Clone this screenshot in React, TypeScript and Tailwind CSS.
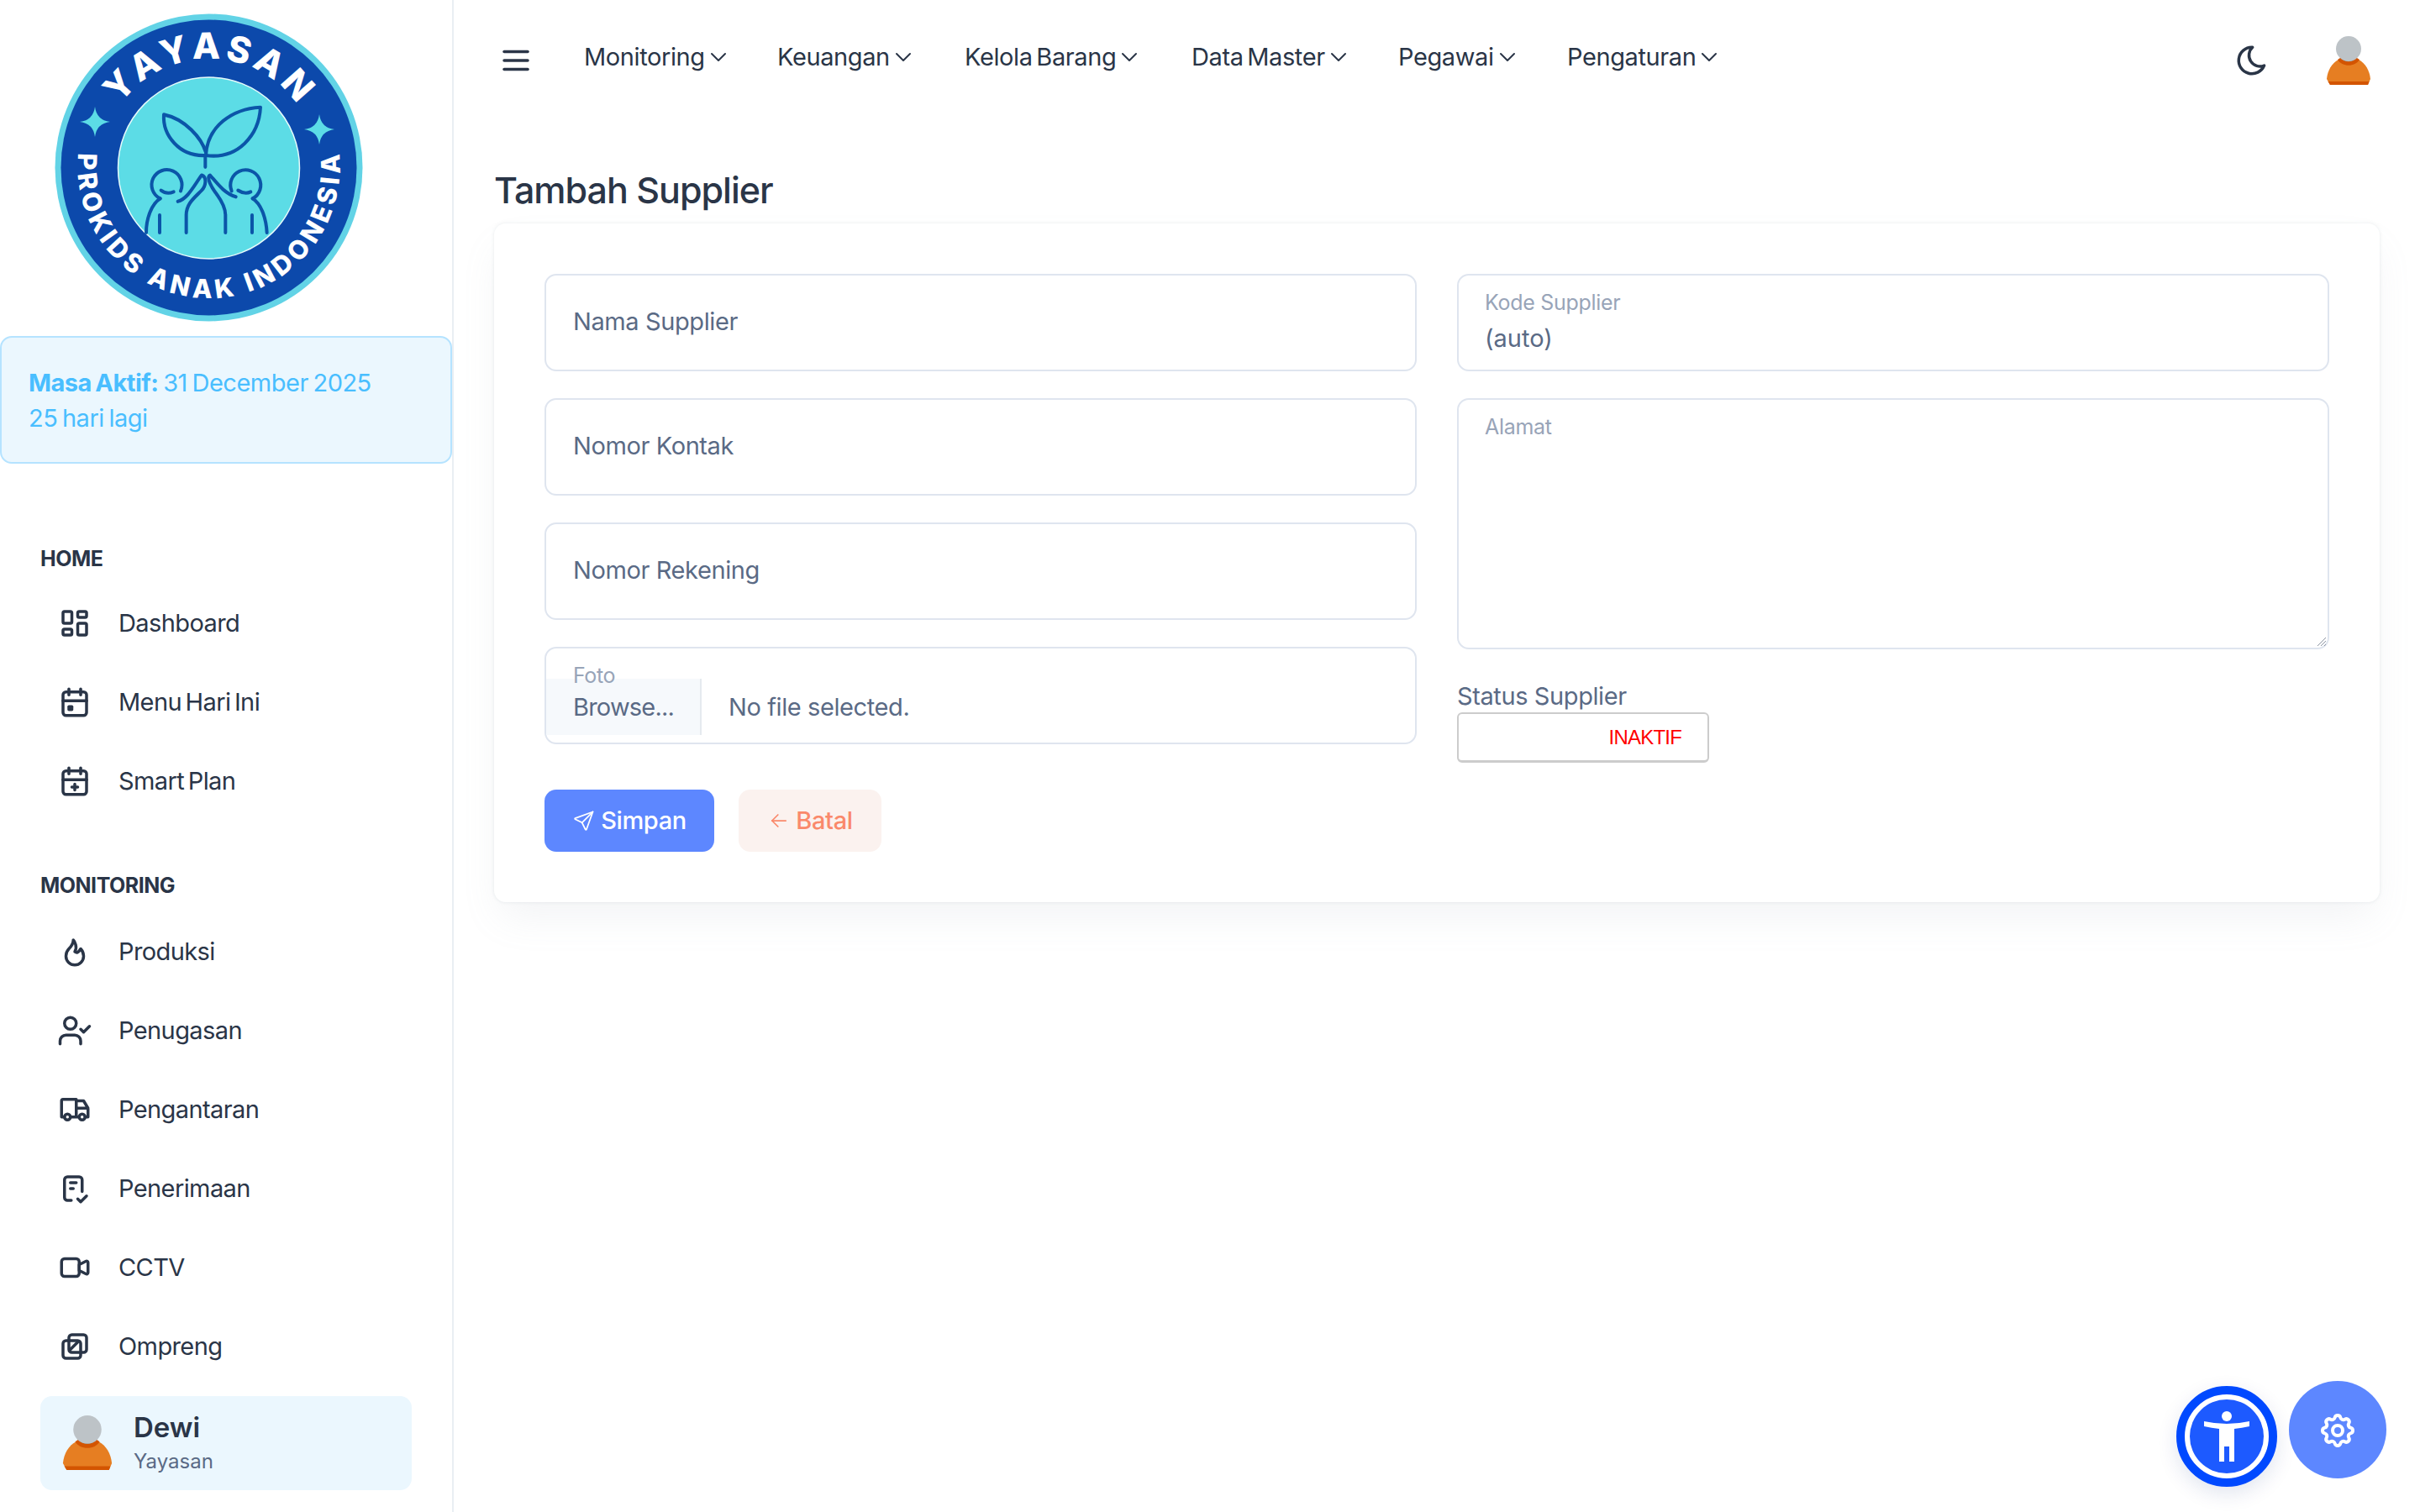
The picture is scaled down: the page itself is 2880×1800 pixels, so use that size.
import React from "react";

const ic: Record<string, string[]> = {
  dashboard: ["M5 4h4a1 1 0 0 1 1 1v6a1 1 0 0 1 -1 1h-4a1 1 0 0 1 -1 -1v-6a1 1 0 0 1 1 -1", "M5 16h4a1 1 0 0 1 1 1v2a1 1 0 0 1 -1 1h-4a1 1 0 0 1 -1 -1v-2a1 1 0 0 1 1 -1", "M15 12h4a1 1 0 0 1 1 1v6a1 1 0 0 1 -1 1h-4a1 1 0 0 1 -1 -1v-6a1 1 0 0 1 1 -1", "M15 4h4a1 1 0 0 1 1 1v2a1 1 0 0 1 -1 1h-4a1 1 0 0 1 -1 -1v-2a1 1 0 0 1 1 -1"],
  calEvent: ["M4 5m0 2a2 2 0 0 1 2 -2h12a2 2 0 0 1 2 2v12a2 2 0 0 1 -2 2h-12a2 2 0 0 1 -2 -2z", "M16 3v4", "M8 3v4", "M4 11h16", "M8 15h2v2h-2z"],
  calPlus: ["M4 5m0 2a2 2 0 0 1 2 -2h12a2 2 0 0 1 2 2v12a2 2 0 0 1 -2 2h-12a2 2 0 0 1 -2 -2z", "M16 3v4", "M8 3v4", "M4 11h16", "M10 16h4", "M12 14v4"],
  flame: ["M12 12c2 -2.96 0 -7 -1 -8c0 3.038 -1.773 4.741 -3 6c-1.226 1.26 -2 3.24 -2 5a6 6 0 1 0 12 0c0 -1.532 -1.056 -3.94 -2 -5c-1.786 3 -2.791 3 -4 2z"],
  userCheck: ["M5 7a4 4 0 1 0 8 0a4 4 0 0 0 -8 0", "M2 21v-2a4 4 0 0 1 4 -4h6a4 4 0 0 1 4 4v2", "M16 11l2 2l4 -4"],
  truck: ["M7 17m-2 0a2 2 0 1 0 4 0a2 2 0 1 0 -4 0", "M17 17m-2 0a2 2 0 1 0 4 0a2 2 0 1 0 -4 0", "M5 17h-2v-11a1 1 0 0 1 1 -1h9v12m-4 0h6m4 0h2v-6h-8m0 -5h5l3 5"],
  checklist: ["M9.615 20h-2.615a2 2 0 0 1 -2 -2v-12a2 2 0 0 1 2 -2h8a2 2 0 0 1 2 2v8", "M14 19l2 2l4 -4", "M9 8h4", "M9 12h2"],
  video: ["M15 10l4.553 -2.276a1 1 0 0 1 1.447 .894v6.764a1 1 0 0 1 -1.447 .894l-4.553 -2.276v-4z", "M3 6m0 2a2 2 0 0 1 2 -2h8a2 2 0 0 1 2 2v8a2 2 0 0 1 -2 2h-8a2 2 0 0 1 -2 -2z"],
  layers: ["M8 4m0 2a2 2 0 0 1 2 -2h8a2 2 0 0 1 2 2v8a2 2 0 0 1 -2 2h-8a2 2 0 0 1 -2 -2z", "M4 8m0 2a2 2 0 0 1 2 -2h8a2 2 0 0 1 2 2v8a2 2 0 0 1 -2 2h-8a2 2 0 0 1 -2 -2z", "M9 14l5 -5"],
  menu: ["M4 6h16", "M4 12h16", "M4 18h16"],
  chevron: ["M6 9l6 6l6 -6"],
  moon: ["M12 3c.132 0 .263 0 .393 0a7.5 7.5 0 0 0 7.92 12.446a9 9 0 1 1 -8.313 -12.454z"],
  send: ["M10 14l11 -11", "M21 3l-6.5 18a.55 .55 0 0 1 -1 0l-3.5 -7l-7 -3.5a.55 .55 0 0 1 0 -1l18 -6.5"],
  arrow: ["M5 12h14", "M5 12l6 6", "M5 12l6 -6"],
  settings: ["M10.325 4.317c.426 -1.756 2.924 -1.756 3.35 0a1.724 1.724 0 0 0 2.573 1.066c1.543 -.94 3.31 .826 2.37 2.37a1.724 1.724 0 0 0 1.065 2.572c1.756 .426 1.756 2.924 0 3.35a1.724 1.724 0 0 0 -1.066 2.573c.94 1.543 -.826 3.31 -2.37 2.37a1.724 1.724 0 0 0 -2.572 1.065c-.426 1.756 -2.924 1.756 -3.35 0a1.724 1.724 0 0 0 -2.573 -1.066c-1.543 .94 -3.31 -.826 -2.37 -2.37a1.724 1.724 0 0 0 -1.065 -2.572c-1.756 -.426 -1.756 -2.924 0 -3.35a1.724 1.724 0 0 0 1.066 -2.573c-.94 -1.543 .826 -3.31 2.37 -2.37c1 .608 2.296 .07 2.572 -1.065z", "M9 12a3 3 0 1 0 6 0a3 3 0 0 0 -6 0"],
};

function Icon({ name, className, sw = 2 }: { name: string; className?: string; sw?: number }) {
  return (
    <svg viewBox="0 0 24 24" fill="none" stroke="currentColor" strokeWidth={sw} strokeLinecap="round" strokeLinejoin="round" className={className}>
      {ic[name].map((d) => (
        <path key={d} d={d} />
      ))}
    </svg>
  );
}

function Avatar({ className }: { className?: string }) {
  return (
    <svg viewBox="0 0 52 59" className={className}>
      <path d="M0 51c1-10 6-19 14-23h24c8 4 13 13 14 23l-3 7H4z" fill="#e67e22" />
      <path d="M1.500 54h49l-1.500 4H4z" fill="#d35400" />
      <path d="M13 28c5 9 21 9 26 0l-3-2H16z" fill="#d35400" />
      <path d="M16 25c4 7 16 7 20 0v-3H16z" fill="#95a5a6" />
      <circle cx="26" cy="15" r="15" fill="#bdc3c7" />
    </svg>
  );
}

function Logo() {
  const teal = "#5cdce6";
  const line = "#0b55a8";
  return (
    <svg viewBox="0 0 367 367" className="w-[367px] h-[367px] ml-[65px] mt-4 shrink-0 [font-family:Inter,sans-serif]">
      <defs>
        <path id="topArc" d="M183.500 312A129 129 0 1 1 183.500 54A129 129 0 1 1 183.500 312" />
        <path id="bottomArc" d="M183.500 27A156 156 0 1 0 183.500 339A156 156 0 1 0 183.500 27" />
      </defs>
      <circle cx="183.500" cy="183.500" r="183" fill="#62d3e6" />
      <circle cx="183.500" cy="183.500" r="176" fill="#0c49ab" />
      <circle cx="183.500" cy="184" r="108" fill={teal} stroke="#e6fafa" strokeWidth="1.500" />
      <text fill="#fff" fontSize="43" fontWeight="800" letterSpacing="5.500" textAnchor="middle">
        <textPath href="#topArc" startOffset="50.300%">YAYASAN</textPath>
      </text>
      <text fill="#fff" fontSize="31" fontWeight="800" letterSpacing="4.800" textAnchor="middle">
        <textPath href="#bottomArc" startOffset="50.200%">PROKIDS ANAK INDONESIA</textPath>
      </text>
      <path d="M48 111Q50 127 66 129Q50 131 48 147Q46 131 30 129Q46 127 48 111Z" fill={teal} />
      <path d="M315 120Q317 136 333 138Q317 140 315 156Q313 140 297 138Q313 136 315 120Z" fill={teal} />
      <g transform="translate(-15 -18.400) scale(0.3333 0.347)" fill="none" stroke={line} strokeWidth="12" strokeLinecap="round" strokeLinejoin="round">
        <path d="M585 540C590 440 680 380 780 375C775 470 700 555 585 540" />
        <path d="M585 530C570 480 510 415 435 400C430 470 490 545 585 540" />
        <path d="M583 540V580" />
        <path d="M422 688A54 52 0 1 1 495 662" />
        <path d="M425 660Q445 675 470 665" />
        <path d="M372 805C372 750 395 705 422 688" />
        <path d="M485 698C520 690 545 640 570 608C590 615 585 645 570 660C545 685 515 705 515 745V805" />
        <path d="M420 745V805" />
        <path d="M752 688A54 52 0 1 0 677 662" />
        <path d="M700 660Q725 675 745 665" />
        <path d="M803 805C800 750 780 705 752 688" />
        <path d="M692 682C650 670 625 635 600 608C585 615 605 650 625 675C640 695 655 720 655 745V805" />
        <path d="M750 745V805" />
      </g>
    </svg>
  );
}

const home = [
  { label: "Dashboard", icon: "dashboard" },
  { label: "Menu Hari Ini", icon: "calEvent" },
  { label: "Smart Plan", icon: "calPlus" },
];
const monitoring = [
  { label: "Produksi", icon: "flame" },
  { label: "Penugasan", icon: "userCheck" },
  { label: "Pengantaran", icon: "truck" },
  { label: "Penerimaan", icon: "checklist" },
  { label: "CCTV", icon: "video" },
  { label: "Ompreng", icon: "layers" },
];
const topNav = [
  { label: "Monitoring", w: "w-[230px]" },
  { label: "Keuangan", w: "w-[223px]" },
  { label: "Kelola Barang", w: "w-[270px]" },
  { label: "Data Master", w: "w-[246px]" },
  { label: "Pegawai", w: "w-[201px]" },
  { label: "Pengaturan", w: "w-[184px]" },
];

function SideItem({ label, icon }: { label: string; icon: string }) {
  return (
    <a className="flex items-center h-[94px] pl-[68px] gap-[31px] text-[#2a3547] text-[29px] tracking-[-0.6px] [word-spacing:-3px]">
      <Icon name={icon} className="w-[42px] h-[42px] shrink-0" />
      {label}
    </a>
  );
}

function Field({ label }: { label: string }) {
  return (
    <div className="h-[116px] border-2 border-[#dfe5ef] rounded-[14px] flex items-center pl-[32px] pb-[3px] text-[29px] tracking-[-0.4px] text-[#5a6a85]">
      {label}
    </div>
  );
}

export default function App() {
  return (
    <div className="flex w-full h-[1800px] overflow-hidden bg-white [font-family:Inter,sans-serif]">
      {/* Sidebar */}
      <aside className="w-[540px] shrink-0 border-r-2 border-[#e9eef3] flex flex-col">
        <Logo />
        <div className="mt-[17px] h-[152px] border-2 border-[#b5e3ff] bg-[#ebf7fe] rounded-[14px] pl-[32px] pt-[2px] flex flex-col justify-center text-[29px] leading-[42px] tracking-[-0.5px] [word-spacing:-2px] text-[#49beff]">
          <p>
            <span className="font-bold">Masa Aktif:</span> 31 December 2025
          </p>
          <p>25 hari lagi</p>
        </div>

        <h5 className="mt-[93px] mb-[10px] pl-12 h-10 leading-10 text-[25px] font-bold tracking-[-0.5px] text-[#2a3547]">HOME</h5>
        {home.map((i) => (
          <SideItem key={i.label} {...i} />
        ))}

        <h5 className="mt-[57px] mb-3 pl-12 h-10 leading-10 text-[25px] font-bold tracking-[-0.5px] text-[#2a3547]">MONITORING</h5>
        {monitoring.map((i) => (
          <SideItem key={i.label} {...i} />
        ))}

        <div className="mt-3 mx-12 h-[112px] bg-[#ebf7fe] rounded-[14px] flex items-center pl-[26px] gap-[25px]">
          <Avatar className="w-[60px] h-[66px]" />
          <div>
            <p className="text-[33px] leading-[44px] font-semibold text-[#2a3547]">Dewi</p>
            <p className="text-[24px] leading-[38px] text-[#5a6a85]">Yayasan</p>
          </div>
        </div>
      </aside>

      {/* Main */}
      <main className="flex-1 min-w-0">
        <header className="h-[144px] flex items-center pl-[53px] pr-[59px] text-[#2a3547]">
          <Icon name="menu" className="w-[42px] h-[42px] shrink-0" />
          <nav className="flex ml-[60px] -mt-2 text-[29px] tracking-[-0.4px] [word-spacing:-3px]">
            {topNav.map((n) => (
              <a key={n.label} className={`flex items-center ${n.w} shrink-0 whitespace-nowrap`}>
                {n.label}
                <Icon name="chevron" sw={1.5} className="w-8 h-8 shrink-0" />
              </a>
            ))}
          </nav>
          <Icon name="moon" className="w-[42px] h-[42px] ml-auto shrink-0" />
          <Avatar className="w-[52px] h-[59px] ml-[68px] shrink-0" />
        </header>

        <div className="px-12">
          <h1 className="h-[122px] flex items-end pb-[10px] text-[43px] leading-[60px] font-medium tracking-[-1px] text-[#2a3547]">Tambah Supplier</h1>
          <div className="bg-white rounded-[14px] shadow-[0_0_4px_rgba(145,158,171,0.2),0_24px_48px_-8px_rgba(145,158,171,0.12)] p-[60px] h-[808px]">
            <div className="grid grid-cols-2 gap-x-12">
              {/* left column */}
              <div className="flex flex-col">
                <div className="flex flex-col gap-8">
                  <Field label="Nama Supplier" />
                  <Field label="Nomor Kontak" />
                  <Field label="Nomor Rekening" />
                  <div className="relative h-[116px] border-2 border-[#dfe5ef] rounded-[14px] pt-[36px] text-[29px] tracking-[-0.4px] text-[#5a6a85]">
                    <div className="flex items-center h-[67px]">
                      <span className="w-[185px] h-full bg-[#f6f9fc] border-r-2 border-[#e5eaef] pl-[32px] flex items-center tracking-[-0.8px]">Browse...</span>
                      <span className="ml-[32px]">No file selected.</span>
                    </div>
                    <span className="absolute left-[32px] top-[16px] text-[25px] leading-8 text-[#98a4b8]">Foto</span>
                  </div>
                </div>
                <div className="mt-[54px] flex gap-[29px]">
                  <button className="w-[202px] h-[74px] bg-[#5d87ff] rounded-[14px] flex items-center justify-center gap-[6px] text-white text-[29px] tracking-[-0.4px] font-medium">
                    <Icon name="send" sw={1.500} className="w-7 h-7" />
                    Simpan
                  </button>
                  <button className="w-[170px] h-[74px] bg-[#fbf2ef] rounded-[14px] flex items-center justify-center gap-[6px] text-[#fa896b] text-[29px] tracking-[-0.4px] font-medium">
                    <Icon name="arrow" sw={1.500} className="w-7 h-7" />
                    Batal
                  </button>
                </div>
              </div>

              {/* right column */}
              <div className="flex flex-col">
                <div className="h-[116px] border-2 border-[#dfe5ef] rounded-[14px] pl-[31px] pt-[14px]">
                  <p className="text-[25px] leading-[36px] tracking-[-0.3px] text-[#98a4b8]">Kode Supplier</p>
                  <p className="mt-1 text-[29px] leading-[42px] text-[#5a6a85]">(auto)</p>
                </div>
                <div className="relative mt-8 h-[299px] border-2 border-[#dfe5ef] rounded-[14px] pl-[31px] pt-[14px] text-[25px] leading-[36px] tracking-[-0.3px] text-[#98a4b8]">
                  Alamat
                  <svg viewBox="0 0 12 12" className="absolute right-[1px] bottom-[1px] w-3 h-3" stroke="#8d96a3" strokeWidth="1">
                    <path d="M1 11L11 1M5 11l6-6M9 11l2-2" />
                  </svg>
                </div>
                <p className="mt-[36px] h-[39px] leading-[39px] text-[29px] tracking-[-0.4px] text-[#5a6a85]">Status Supplier</p>
                <div className="w-[300px] h-[60px] border-2 border-[#ccc] border-b-[3px] rounded-[6px] flex items-center justify-end pr-[31px] text-[24px] tracking-[-0.8px] text-[#ff0000] [font-family:'Liberation_Sans',sans-serif]">
                  INAKTIF
                </div>
              </div>
            </div>
          </div>
        </div>
      </main>

      {/* Floating buttons */}
      <div className="fixed right-[40px] bottom-[30px] flex items-start gap-[14px]">
        <div className="w-[120px] h-[120px] mt-[6px] rounded-full border-[10px] border-[#0049ff] bg-white shadow-[0_8px_24px_rgba(0,40,120,0.12)] flex items-center justify-center">
          <svg viewBox="10 10 100 100" className="w-[100px] h-[100px]">
            <circle cx="60" cy="60" r="44" fill="#1d5aff" />
            <circle cx="60" cy="36" r="6" fill="#fff" />
            <path d="M33 42Q60 48 87 42L87 48Q78 50 69 51V90H63V72H57V90H51V51Q42 50 33 48Z" fill="#fff" />
          </svg>
        </div>
        <div className="w-[116px] h-[116px] rounded-full bg-[#5d87ff] flex items-center justify-center text-white">
          <Icon name="settings" className="w-12 h-12 mt-[2px]" />
        </div>
      </div>
    </div>
  );
}
